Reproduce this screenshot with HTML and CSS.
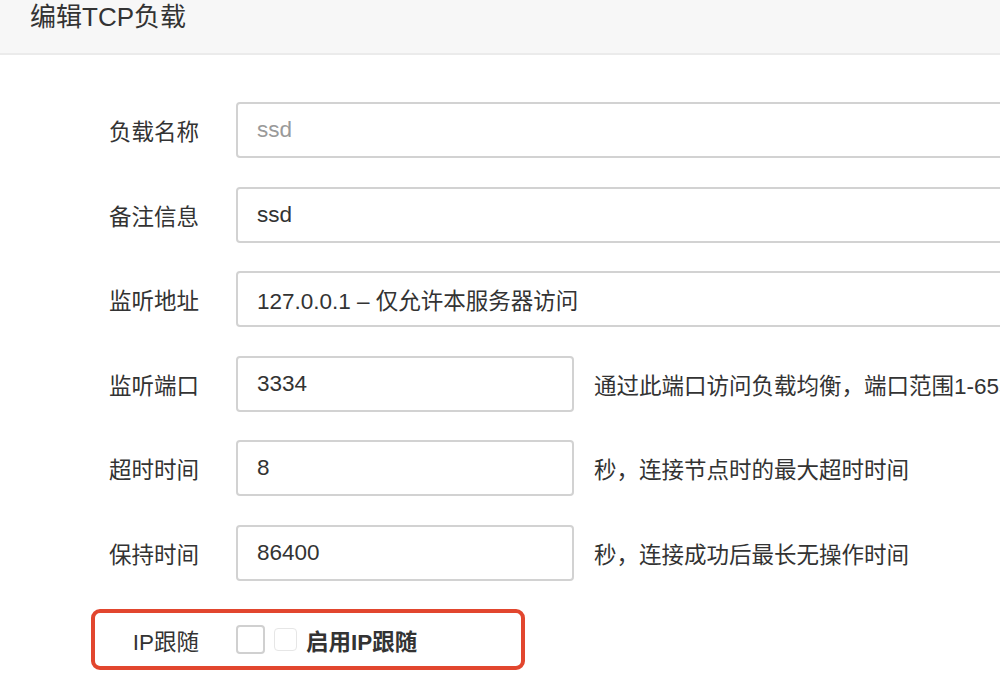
FILE: index.html
```html
<!DOCTYPE html>
<html lang="zh-CN">
<head>
<meta charset="utf-8">
<title>编辑TCP负载</title>
<link rel="stylesheet" href="styles.css">
</head>
<body>
<div class="page">
  <header class="head"><h1 class="title">编辑TCP负载</h1></header>
  <form class="form">
    <div class="row">
      <label class="label">负载名称</label>
      <input class="field wide" type="text" placeholder="ssd">
    </div>
    <div class="row">
      <label class="label">备注信息</label>
      <input class="field wide" type="text" value="ssd">
    </div>
    <div class="row">
      <label class="label">监听地址</label>
      <div class="field wide select">127.0.0.1 – 仅允许本服务器访问</div>
    </div>
    <div class="row">
      <label class="label">监听端口</label>
      <input class="field short" type="text" value="3334">
      <span class="help">通过此端口访问负载均衡，端口范围1-65535</span>
    </div>
    <div class="row">
      <label class="label">超时时间</label>
      <input class="field short" type="text" value="8">
      <span class="help">秒，连接节点时的最大超时时间</span>
    </div>
    <div class="row">
      <label class="label">保持时间</label>
      <input class="field short" type="text" value="86400">
      <span class="help">秒，连接成功后最长无操作时间</span>
    </div>
    <div class="row check-row">
      <label class="label">IP跟随</label>
      <span class="box"></span>
      <span class="box small"></span>
      <span class="check-text">启用IP跟随</span>
      <span class="mark"></span>
    </div>
  </form>
</div>
</body>
</html>
```

FILE: styles.css
```css
html, body {
  margin: 0;
  padding: 0;
  background: #ffffff;
}
body {
  width: 1000px;
  height: 694px;
  overflow: hidden;
  font-family: "Liberation Sans", "Noto Sans CJK SC", sans-serif;
  color: #333333;
}
.page {
  width: 1000px;
}
.head {
  height: 53px;
  background: #f7f7f7;
  border-bottom: 2px solid #ebebeb;
  box-sizing: content-box;
}
.title {
  margin: 0;
  padding-left: 30px;
  padding-top: 1px;
  font-size: 26px;
  font-weight: 400;
  line-height: 33px;
  color: #333333;
  white-space: nowrap;
}
.form {
  display: flex;
  flex-direction: column;
  gap: 28.6px;
  padding-top: 47px;
  margin: 0;
}
.row {
  display: flex;
  align-items: center;
  height: 56px;
  position: relative;
}
.label {
  width: 199px;
  flex: none;
  text-align: right;
  font-size: 22.5px;
  color: #333333;
  margin-right: 37px;
  white-space: nowrap;
}
.field {
  box-sizing: border-box;
  height: 56px;
  border: 2px solid #d2d2d2;
  border-radius: 4px;
  padding: 0 19px;
  font-family: "Liberation Sans", "Noto Sans CJK SC", sans-serif;
  font-size: 22.5px;
  color: #333333;
  background: #ffffff;
  outline: none;
  flex: none;
}
.field::placeholder {
  color: #9a9a9a;
}
.wide {
  width: 800px;
}
.short {
  width: 338px;
}
.select {
  display: flex;
  align-items: center;
  white-space: nowrap;
}
.help {
  margin-left: 20px;
  font-size: 22.5px;
  color: #333333;
  white-space: nowrap;
}
.check-row {
  height: 60px;
}
.box {
  box-sizing: border-box;
  width: 29px;
  height: 29px;
  border: 2px solid #d0d0d0;
  border-radius: 4px;
  flex: none;
  background: #ffffff;
}
.box.small {
  width: 23px;
  height: 23px;
  border: 1px solid #e6e6e6;
  margin-left: 9px;
}
.check-text {
  margin-left: 9px;
  font-size: 22.5px;
  font-weight: 700;
  color: #333333;
  white-space: nowrap;
}
.mark {
  position: absolute;
  left: 91px;
  top: -1px;
  width: 434px;
  height: 61px;
  box-sizing: border-box;
  border: 4px solid #e2462e;
  border-radius: 9px;
  pointer-events: none;
}
```
